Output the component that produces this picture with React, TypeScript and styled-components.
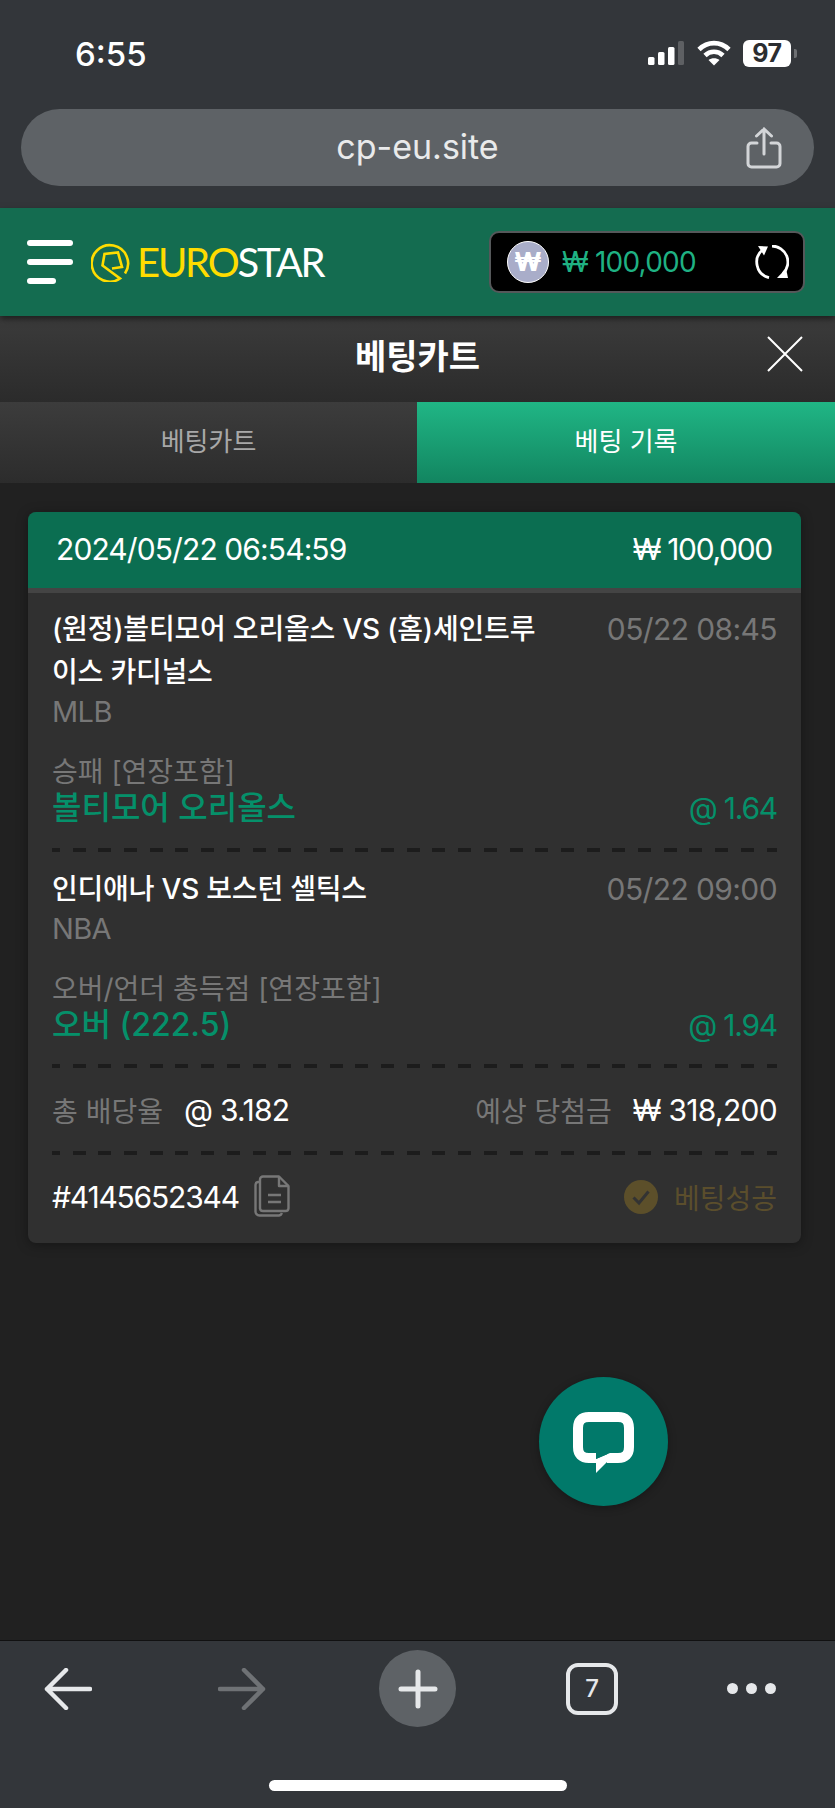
import React from "react";
import styled, { createGlobalStyle } from "styled-components";

const GlobalStyle = createGlobalStyle`
  html, body {
    margin: 0;
    padding: 0;
    background: #212121;
  }
  * {
    box-sizing: border-box;
  }
  body {
    font-family: Inter, "Noto Sans CJK KR", sans-serif;
  }
`;

const Page = styled.div`
  position: relative;
  width: 835px;
  height: 1808px;
  display: flex;
  flex-direction: column;
  overflow: hidden;
  background: #212121;
`;

const Chrome = styled.div`
  background: #33363a;
  height: 208px;
  padding: 0 21px;
  display: flex;
  flex-direction: column;
`;

const StatusBar = styled.div`
  height: 109px;
  padding: 34px 17px 0 54px;
  display: flex;
  justify-content: space-between;
  align-items: flex-start;
`;

const Clock = styled.div`
  color: #fff;
  font-size: 33px;
  line-height: 40px;
  font-weight: 500;
`;

const StatusIcons = styled.div`
  display: flex;
  align-items: center;
  height: 40px;
  margin-top: -1px;
`;

const Signal = styled.svg`
  width: 36px;
  height: 24px;
  margin-right: 13px;
`;

const Wifi = styled.svg`
  width: 34px;
  height: 26px;
  margin-right: 12px;
`;

const Battery = styled.div`
  width: 48px;
  height: 27px;
  border-radius: 6px;
  background: #fff;
  color: #2b2d30;
  font-size: 25px;
  letter-spacing: -0.5px;
  line-height: 27px;
  font-weight: 700;
  text-align: center;
`;

const BatteryNub = styled.div`
  width: 3px;
  height: 9px;
  margin-left: 3px;
  border-radius: 0 2px 2px 0;
  background: #6d6f72;
`;

const AddressBar = styled.div`
  position: relative;
  height: 77px;
  border-radius: 39px;
  background: #5e6266;
  color: #e9eaeb;
  font-size: 34px;
  line-height: 76px;
  text-align: center;
`;

const ShareIcon = styled.svg`
  position: absolute;
  right: 32px;
  top: 18px;
  width: 36px;
  height: 42px;
`;

const SiteHeader = styled.header`
  height: 108px;
  background: #146c50;
  display: flex;
  align-items: center;
  justify-content: space-between;
  padding: 0 30px 0 27px;
  box-shadow: 0 3px 6px rgba(0, 0, 0, 0.5);
  position: relative;
  z-index: 1;
`;

const Brand = styled.div`
  display: flex;
  align-items: center;
`;

const Burger = styled.div`
  width: 46px;
  display: flex;
  flex-direction: column;
  gap: 13px;
  margin-right: 18px;
`;

const BurgerBar = styled.span<{ $short?: boolean }>`
  display: block;
  height: 6px;
  border-radius: 3px;
  background: #fff;
  width: ${({ $short }) => ($short ? "29px" : "46px")};
`;

const LogoMark = styled.svg`
  width: 40px;
  height: 40px;
  margin-right: 6px;
`;

const LogoText = styled.div`
  font-family: Lato, sans-serif;
  font-size: 40px;
  letter-spacing: -2.2px;
  line-height: 48px;
  font-weight: 400;
  color: #fff;
`;

const LogoAccent = styled.span`
  color: #ffdc00;
`;

const BalanceBox = styled.div`
  width: 316px;
  height: 62px;
  border: 2px solid #55585a;
  border-radius: 10px;
  background: #000;
  display: flex;
  align-items: center;
  padding: 0 14px 0 16px;
`;

const WonCoin = styled.div`
  width: 42px;
  height: 42px;
  border-radius: 50%;
  border: 1px solid #fff;
  background: #a9adc9;
  color: #fff;
  font-size: 26px;
  line-height: 40px;
  font-weight: 800;
  text-align: center;
  margin-right: 13px;
`;

const BalanceText = styled.div`
  flex: 1;
  color: #1fb183;
  font-size: 28px;
  letter-spacing: -0.8px;
  line-height: 34px;
`;

const RefreshIcon = styled.svg`
  width: 34px;
  height: 34px;
`;

const TitleBar = styled.div`
  position: relative;
  height: 86px;
  background: linear-gradient(#3b3b3b, #2b2b2b);
  color: #fff;
  font-size: 34px;
  font-weight: 700;
  line-height: 82px;
  text-align: center;
`;

const CloseIcon = styled.svg`
  position: absolute;
  right: 32px;
  top: 20px;
  width: 36px;
  height: 36px;
`;

const Tabs = styled.div`
  display: grid;
  grid-template-columns: 417px 418px;
  height: 81px;
`;

const Tab = styled.div<{ $active?: boolean }>`
  background: ${({ $active }) =>
    $active
      ? "linear-gradient(#20b685, #128560)"
      : "linear-gradient(#3c3c3c, #2c2c2c)"};
  color: ${({ $active }) => ($active ? "#fff" : "#a8a8a8")};
  font-size: 26px;
  line-height: 79px;
  text-align: center;
`;

const Content = styled.main`
  flex: 1;
  padding: 29px 34px 0 28px;
`;

const Card = styled.section`
  border-radius: 8px;
  overflow: hidden;
  background: #303030;
  box-shadow: 0 2px 12px rgba(0, 0, 0, 0.35);
`;

const CardHeader = styled.div`
  height: 81px;
  background: #0b6e51;
  border-bottom: 5px solid;
  border-image: linear-gradient(#075a42 40%, #444 40%) 1;
  display: flex;
  justify-content: space-between;
  align-items: center;
  padding: 0 29px 2px 28px;
  color: #fff;
  font-size: 30px;
  letter-spacing: -0.9px;
`;

const HeaderAmount = styled.span`
  letter-spacing: -1.3px;
`;

const CardBody = styled.div`
  padding: 15px 24px 0;
`;

const Match = styled.div`
  padding-bottom: 22px;
`;

const MatchTop = styled.div`
  display: flex;
  justify-content: space-between;
  align-items: flex-start;
`;

const TeamName = styled.div`
  width: 490px;
  padding-bottom: 1px;
  color: #fff;
  font-size: 28px;
  letter-spacing: -0.2px;
  line-height: 43px;
  font-weight: 500;
`;

const Muted = styled.div`
  color: #777;
  font-size: 28px;
  line-height: 34px;
`;

const MatchDate = styled(Muted)`
  font-size: 30px;
  letter-spacing: -0.6px;
  line-height: 36px;
  margin-top: 3px;
`;

const League = styled(Muted)`
  font-size: 29px;
  letter-spacing: -0.6px;
`;

const Market = styled(Muted)`
  margin-top: 26px;
`;

const PickRow = styled.div`
  display: flex;
  justify-content: space-between;
  align-items: center;
  color: #05906a;
  height: 36px;
  margin-top: 1px;
`;

const PickName = styled.div`
  font-size: 32px;
  line-height: 36px;
  font-weight: 500;
`;

const Odds = styled.div`
  font-size: 30px;
  letter-spacing: -1.2px;
  line-height: 36px;
`;

const Dash = styled.div`
  height: 4px;
  background: repeating-linear-gradient(
    90deg,
    #1c1c1c 0 13px,
    transparent 13px 25.7px
  );
  background-position: -5px 0;
`;

const SecondMatch = styled.div`
  padding-top: 15.5px;
  margin-bottom: -0.5px;
`;

const TotalRow = styled.div`
  height: 83px;
  display: flex;
  justify-content: space-between;
  align-items: center;
`;

const TotalGroup = styled.div`
  display: flex;
  align-items: center;
  gap: 21px;
`;

const TotalLabel = styled.span`
  color: #777;
  font-size: 28px;
`;

const TotalValue = styled.span`
  color: #fff;
  font-size: 30px;
  letter-spacing: -0.7px;
`;

const FootRow = styled.div`
  height: 88px;
  padding-bottom: 5px;
  display: flex;
  justify-content: space-between;
  align-items: center;
`;

const TicketId = styled.div`
  display: flex;
  align-items: center;
  gap: 15px;
  color: #fff;
  font-size: 30px;
  letter-spacing: -1.2px;
`;

const CopyIcon = styled.svg`
  width: 36px;
  height: 42px;
  margin-top: -2px;
`;

const BetStatus = styled.div`
  display: flex;
  align-items: center;
  gap: 16px;
  color: #5b4e2c;
  font-size: 28px;
`;

const CheckIcon = styled.svg`
  width: 34px;
  height: 34px;
`;

const ChatButton = styled.div`
  position: absolute;
  left: 539px;
  top: 1377px;
  width: 129px;
  height: 129px;
  border-radius: 50%;
  background: #01796a;
  box-shadow: 0 2px 8px rgba(0, 0, 0, 0.3);
  display: flex;
  align-items: center;
  justify-content: center;
`;

const ChatIcon = styled.svg`
  width: 62px;
  height: 62px;
  margin-top: 3px;
`;

const BottomBar = styled.footer`
  height: 168px;
  background: #33363a;
  border-top: 1px solid #111;
  position: relative;
`;

const NavRow = styled.nav`
  height: 95px;
  padding-left: 44px;
  display: flex;
  align-items: center;
  gap: 110px;
`;

const NavIcon = styled.svg<{ $forward?: boolean }>`
  width: 48px;
  height: 42px;
  margin-left: ${({ $forward }) => ($forward ? "16px" : "0")};
`;

const PlusCircle = styled.div`
  width: 77px;
  height: 77px;
  margin-left: 3px;
  border-radius: 50%;
  background: #5e6266;
  display: flex;
  align-items: center;
  justify-content: center;
`;

const TabCount = styled.div`
  width: 52px;
  height: 52px;
  border: 4px solid #e6e8ea;
  border-radius: 12px;
  color: #e6e8ea;
  font-size: 24px;
  font-weight: 500;
  line-height: 44px;
  text-align: center;
`;

const Dots = styled.div`
  display: flex;
  gap: 8px;
  margin-left: -1px;
`;

const Dot = styled.span`
  width: 11px;
  height: 11px;
  border-radius: 50%;
  background: #e6e8ea;
`;

const HomeIndicator = styled.div`
  width: 298px;
  height: 11px;
  margin: 44px auto 0;
  border-radius: 6px;
  background: #fff;
`;

const matches = [
  {
    teams: "(원정)볼티모어 오리올스 VS (홈)세인트루이스 카디널스",
    date: "05/22 08:45",
    league: "MLB",
    market: "승패 [연장포함]",
    pick: "볼티모어 오리올스",
    odds: "@ 1.64",
  },
  {
    teams: "인디애나 VS 보스턴 셀틱스",
    date: "05/22 09:00",
    league: "NBA",
    market: "오버/언더 총득점 [연장포함]",
    pick: "오버 (222.5)",
    odds: "@ 1.94",
  },
];

const MatchBlock = ({ m }: { m: (typeof matches)[number] }) => (
  <Match>
    <MatchTop>
      <TeamName>{m.teams}</TeamName>
      <MatchDate>{m.date}</MatchDate>
    </MatchTop>
    <League>{m.league}</League>
    <Market>{m.market}</Market>
    <PickRow>
      <PickName>{m.pick}</PickName>
      <Odds>{m.odds}</Odds>
    </PickRow>
  </Match>
);

export default function App() {
  return (
    <Page>
      <GlobalStyle />
      <Chrome>
        <StatusBar>
          <Clock>6:55</Clock>
          <StatusIcons>
            <Signal viewBox="0 0 36 24">
              <rect x="0" y="16" width="6.5" height="8" rx="1.5" fill="#fff" />
              <rect x="10" y="11" width="6.5" height="13" rx="1.5" fill="#fff" />
              <rect x="20" y="6" width="6.5" height="18" rx="1.5" fill="#fff" />
              <rect x="30" y="0" width="6" height="24" rx="1.5" fill="#5e6063" />
            </Signal>
            <Wifi viewBox="0 0 34 26" fill="none" stroke="#fff" strokeWidth="4.6">
              <path d="M2 9.5C10.5 1 23.5 1 32 9.5" />
              <path d="M8 15.5C13 10.5 21 10.5 26 15.5" />
              <path d="M17 25.5L11.5 20C14.5 17.5 19.5 17.5 22.5 20Z" fill="#fff" stroke="none" />
            </Wifi>
            <Battery>97</Battery>
            <BatteryNub />
          </StatusIcons>
        </StatusBar>
        <AddressBar>
          cp-eu.site
          <ShareIcon viewBox="0 0 36 42" fill="none" stroke="#d3d5d8" strokeWidth="3" strokeLinecap="round">
            <path d="M11 16H5.5A3.5 3.5 0 0 0 2 19.5V36.5A3.5 3.5 0 0 0 5.5 40H30.5A3.5 3.5 0 0 0 34 36.5V19.5A3.5 3.5 0 0 0 30.5 16H25" />
            <path d="M18 27V2M10.5 9L18 2L25.5 9" />
          </ShareIcon>
        </AddressBar>
      </Chrome>

      <SiteHeader>
        <Brand>
          <Burger>
            <BurgerBar />
            <BurgerBar />
            <BurgerBar $short />
          </Burger>
          <LogoMark viewBox="0 0 40 40" fill="none" stroke="#ffdc00" strokeWidth="2.6">
            <path d="M34 31.5A18.2 18.2 0 1 0 29 36.5L11.5 23.5L13.5 12L27 10.5L31 25L21 26.5" />
          </LogoMark>
          <LogoText>
            <LogoAccent>EURO</LogoAccent>STAR
          </LogoText>
        </Brand>
        <BalanceBox>
          <WonCoin>₩</WonCoin>
          <BalanceText>₩ 100,000</BalanceText>
          <RefreshIcon viewBox="0 0 34 34" fill="none" stroke="#fff" strokeWidth="2.8">
            <path d="M8 4.500A16 16 0 0 0 14 32.700" />
            <path d="M3 1L13 1.500L9 10.500Z" fill="#fff" stroke="none" />
            <path d="M17 1A16 16 0 0 1 28 28.500" />
            <path d="M22 33L33 33L31 23.500Z" fill="#fff" stroke="none" />
          </RefreshIcon>
        </BalanceBox>
      </SiteHeader>

      <TitleBar>
        베팅카트
        <CloseIcon viewBox="0 0 36 36" stroke="#fff" strokeWidth="2">
          <path d="M1 1L35 35M35 1L1 35" />
        </CloseIcon>
      </TitleBar>
      <Tabs>
        <Tab>베팅카트</Tab>
        <Tab $active>베팅 기록</Tab>
      </Tabs>

      <Content>
        <Card>
          <CardHeader>
            <span>2024/05/22 06:54:59</span>
            <HeaderAmount>₩ 100,000</HeaderAmount>
          </CardHeader>
          <CardBody>
            <MatchBlock m={matches[0]} />
            <Dash />
            <SecondMatch>
              <MatchBlock m={matches[1]} />
            </SecondMatch>
            <Dash />
            <TotalRow>
              <TotalGroup>
                <TotalLabel>총 배당율</TotalLabel>
                <TotalValue>@ 3.182</TotalValue>
              </TotalGroup>
              <TotalGroup>
                <TotalLabel>예상 당첨금</TotalLabel>
                <TotalValue>₩ 318,200</TotalValue>
              </TotalGroup>
            </TotalRow>
            <Dash />
            <FootRow>
              <TicketId>
                #4145652344
                <CopyIcon viewBox="0 0 36 42" fill="none" stroke="#777" strokeWidth="2.4" strokeLinejoin="round">
                  <path d="M6 7H4A3 3 0 0 0 1.5 10V36A4 4 0 0 0 5.5 40.5H25A4 4 0 0 0 28 38" />
                  <path d="M9 1.5H25L34.5 11V33.5A3 3 0 0 1 31.5 36H9A3 3 0 0 1 6 33.5V4.5A3 3 0 0 1 9 1.5Z" />
                  <path d="M25 1.5V11H34.5M14 20H27M14 27H27" />
                </CopyIcon>
              </TicketId>
              <BetStatus>
                <CheckIcon viewBox="0 0 34 34">
                  <circle cx="17" cy="17" r="17" fill="#5c4f2a" />
                  <path d="M9.5 17.5L15 23L24.5 11.5" fill="none" stroke="#333" strokeWidth="3" />
                </CheckIcon>
                베팅성공
              </BetStatus>
            </FootRow>
          </CardBody>
        </Card>
      </Content>

      <ChatButton>
        <ChatIcon viewBox="0 0 62 62">
          <path
            d="M23 46H16Q5 46 5 35V16Q5 5 16 5H45Q56 5 56 16V35Q56 46 45 46H34"
            fill="none"
            stroke="#fff"
            strokeWidth="10"
          />
          <path d="M23 47V61L37 47V41Z" fill="#fff" />
          <path d="M23 41V47L37 41Z" fill="#01796a" />
        </ChatIcon>
      </ChatButton>

      <BottomBar>
        <NavRow>
          <NavIcon viewBox="0 0 48 42" fill="none" stroke="#e6e8ea" strokeWidth="4.500" strokeLinecap="round" strokeLinejoin="round">
            <path d="M46 21H3M22 2L3 21L22 40" />
          </NavIcon>
          <NavIcon $forward viewBox="0 0 48 42" fill="none" stroke="#6f7275" strokeWidth="4.500" strokeLinecap="round" strokeLinejoin="round">
            <path d="M2 21H45M26 2L45 21L26 40" />
          </NavIcon>
          <PlusCircle>
            <svg width="40" height="40" viewBox="0 0 40 40" stroke="#e6e8ea" strokeWidth="5" strokeLinecap="round">
              <path d="M20 3V37M3 20H37" />
            </svg>
          </PlusCircle>
          <TabCount>7</TabCount>
          <Dots>
            <Dot />
            <Dot />
            <Dot />
          </Dots>
        </NavRow>
        <HomeIndicator />
      </BottomBar>
    </Page>
  );
}
